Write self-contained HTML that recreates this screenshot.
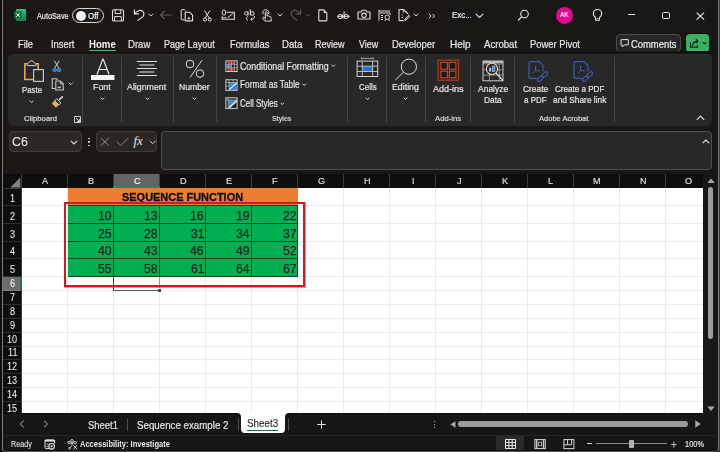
<!DOCTYPE html>
<html><head><meta charset="utf-8">
<style>
*{margin:0;padding:0;box-sizing:border-box}
html,body{width:720px;height:452px;overflow:hidden;background:#0e0e0e}
body{position:relative;font-family:"Liberation Sans",sans-serif;color:#e8e8e8}
.a{position:absolute;white-space:nowrap}
div.t{filter:grayscale(1)}
svg.a{overflow:visible}
</style></head><body>
<div class="a" style="left:0px;top:0px;width:720px;height:452px;background:#101010"></div>
<div class="a" style="left:2px;top:0px;width:716px;height:452px;background:linear-gradient(90deg,#1c1714 0%,#1b1715 45%,#161815 100%);border-radius:0 4px 4px 4px"></div>
<div class="a" style="left:719px;top:0px;width:1px;height:452px;background:#3a3a3a"></div>
<svg class="a" style="left:13px;top:8px;" width="14" height="14" viewBox="0 0 14 14" fill="none"><defs><linearGradient id="xg" x1="0" y1="0" x2="0" y2="1"><stop offset="0" stop-color="#33c481"/><stop offset=".5" stop-color="#21a366"/><stop offset="1" stop-color="#107c41"/></linearGradient></defs>
<rect x="3" y="1" width="10" height="12" rx="1.2" fill="url(#xg)"/>
<rect x="1.2" y="3.2" width="7.6" height="7.6" rx=".8" fill="#13713f"/>
<path d="M3.3 5.2L6.7 8.8M6.7 5.2L3.3 8.8" stroke="#f0f0f0" stroke-width="1"/></svg>
<div class="a t" style="left:36.96px;top:13.00px;font-size:8.14px;line-height:1;color:#e8e8e8;font-weight:400;transform:scaleX(0.896);transform-origin:0 0;-webkit-text-stroke:0.2px #e8e8e8;">AutoSave</div>
<div class="a" style="left:72px;top:8px;width:32px;height:15px;border:1.2px solid #d8d8d8;border-radius:8px;background:#1c1a18"></div>
<div class="a" style="left:75.5px;top:10.5px;width:10px;height:10px;background:#f4f4f4;border-radius:50%"></div>
<div class="a t" style="left:88.04px;top:13.00px;font-size:8.14px;line-height:1;color:#f2f2f2;font-weight:400;transform:scaleX(0.983);transform-origin:0 0;-webkit-text-stroke:0.2px #f2f2f2;">Off</div>
<svg class="a" style="left:111px;top:9px;" width="14" height="13" viewBox="0 0 14 13" fill="none"><rect x="1.5" y="0.8" width="11" height="11.2" rx="1.3" stroke="#e0e0e0" stroke-width="1.1"/><path d="M4.2 1V4.6H9.8V1" stroke="#e0e0e0" stroke-width="1"/><path d="M3.6 12V7.6H10.4V12" stroke="#e0e0e0" stroke-width="1"/></svg>
<svg class="a" style="left:132px;top:8px;" width="14" height="14" viewBox="0 0 14 14" fill="none"><path d="M2.4 1.6V5.9H6.8" stroke="#e8e8e8" stroke-width="1.1"/><path d="M2.6 5.7C5.3 2.4 9.2 1.2 11.2 3.8C12.6 5.7 11.8 7.6 10.2 9.1L5.6 12.6" stroke="#e8e8e8" stroke-width="1.1"/></svg>
<svg class="a" style="left:148px;top:13px;" width="6" height="4" viewBox="0 0 6 4" fill="none"><path d="M0.6 0.8l2.2 2.2 2.2-2.2" stroke="#e0e0e0" stroke-width="1"/></svg>
<svg class="a" style="left:159px;top:10px;" width="14" height="10" viewBox="0 0 14 10" fill="none"><path d="M1.5 5h11M5.5 1l-4 4 4 4" stroke="#5c5c5c" stroke-width="1.1"/></svg>
<svg class="a" style="left:180px;top:9px;" width="14" height="13" viewBox="0 0 14 13" fill="none"><path d="M4.6 10.8H1.8Q1.2 10.8 1.2 10.2V1.2Q1.2 .6 1.8 .6H4.4L5.6 1.8" stroke="#e0e0e0" stroke-width="1"/><path d="M5.2 3.2H9.6L12.6 6.2V11.4Q12.6 11.9 12.1 11.9H5.7Q5.2 11.9 5.2 11.4Z" fill="#1a1715" stroke="#e0e0e0" stroke-width="1.1"/><path d="M7.4 10.2L8.9 7.6 10.4 10.2Z" fill="#e0e0e0"/></svg>
<svg class="a" style="left:203px;top:10px;" width="9" height="12" viewBox="0 0 9 12" fill="none"><path d="M1.5 0.5l5 8M7 0.5l-5 8" stroke="#e0e0e0" stroke-width="1"/><circle cx="2" cy="9.5" r="1.6" stroke="#e0e0e0" stroke-width="1"/><circle cx="6.8" cy="9.5" r="1.6" stroke="#e0e0e0" stroke-width="1"/></svg>
<svg class="a" style="left:221px;top:8.5px;" width="15" height="11" viewBox="0 0 15 11" fill="none"><path d="M5.5 3.2H13.4V10.2H1.2V7.2" stroke="#e0e0e0" stroke-width="1.1"/><rect x="1.3" y="1" width="3.2" height="5" rx="1.4" stroke="#e0e0e0" stroke-width="1"/><path d="M6.5 8.8L12 4.6" stroke="#e0e0e0" stroke-width="1"/><path d="M2.2 8.6h3.2" stroke="#e0e0e0" stroke-width=".9"/></svg>
<svg class="a" style="left:243px;top:8px;" width="13" height="14" viewBox="0 0 13 14" fill="none"><path d="M5 3.5v4M5 5.3A1.7 1.7 0 1 0 5 5.4" stroke="#e0e0e0" stroke-width="1"/><path d="M7.3 1.4v6M7.3 5.5a1.9 1.9 0 1 0 3.8 0a1.9 1.9 0 1 0 -3.8 0" stroke="#e0e0e0" stroke-width="1"/><path d="M4.8 8.6a2 2 0 0 0 0 3.8" stroke="#e0e0e0" stroke-width="1"/><path d="M11.5 8c0 2.2-1 3.3-3.5 3.3M9.3 10l-1.6 1.3 1.6 1.4" stroke="#e0e0e0" stroke-width="1"/></svg>
<svg class="a" style="left:260px;top:8px;" width="13" height="14" viewBox="0 0 13 14" fill="none"><path d="M3.2 6.2a3 3 0 1 1 5.2 0" stroke="#e0e0e0" stroke-width="1"/><path d="M5.3 11.5V4.6a0.9 0.9 0 0 1 1.8 0V8h1.6a2.5 2.5 0 0 1 2.5 2.5v2.6H4.8L2.8 10.5a0.9 0.9 0 0 1 1.4-1.1L5.3 10.6" stroke="#e0e0e0" stroke-width="1"/></svg>
<svg class="a" style="left:277px;top:13px;" width="6" height="4" viewBox="0 0 6 4" fill="none"><path d="M0.8 0.8l2.2 2.2 2.2-2.2" stroke="#d8d8d8" stroke-width="1"/></svg>
<svg class="a" style="left:289px;top:8px;" width="14" height="14" viewBox="0 0 14 14" fill="none"><path d="M11.6 1.6V5.9H7.2" stroke="#5c5c5c" stroke-width="1.1"/><path d="M11.4 5.7C8.7 2.4 4.8 1.2 2.8 3.8C1.4 5.7 2.2 7.6 3.8 9.1L8.4 12.6" stroke="#5c5c5c" stroke-width="1.1"/></svg>
<svg class="a" style="left:305px;top:13px;" width="6" height="4" viewBox="0 0 6 4" fill="none"><path d="M0.8 0.8l2.2 2.2 2.2-2.2" stroke="#5a5a5a" stroke-width="1"/></svg>
<svg class="a" style="left:317px;top:9px;" width="11" height="13" viewBox="0 0 11 13" fill="none"><path d="M2.4 .9H6.6L9.9 4.2V11.3Q9.9 11.9 9.3 11.9H2.4Q1.8 11.9 1.8 11.3V1.5Q1.8 .9 2.4 .9Z" stroke="#e0e0e0" stroke-width="1.1"/><path d="M6.8 1.2L9.6 4H6.8z" fill="#e0e0e0"/></svg>
<svg class="a" style="left:337px;top:10px;" width="13" height="10" viewBox="0 0 13 10" fill="none"><circle cx="3.1" cy="6.5" r="2.1" stroke="#e0e0e0" stroke-width="1"/><path d="M5.3 4.2V8.8M7.1 1.2V8.8" stroke="#e0e0e0" stroke-width="1"/><circle cx="9.3" cy="6.5" r="2.1" stroke="#e0e0e0" stroke-width="1"/><path d="M0.3 6.3H12.7" stroke="#e8e8e8" stroke-width="1"/></svg>
<svg class="a" style="left:357px;top:9px;" width="14" height="11" viewBox="0 0 14 11" fill="none"><path d="M1 3h3l1.2-1.8h3.6l1.2 1.8h3v7h-12z" stroke="#e0e0e0" stroke-width="1.1"/><circle cx="7" cy="6.3" r="2.2" stroke="#e0e0e0" stroke-width="1.1"/></svg>
<svg class="a" style="left:378px;top:9px;" width="14" height="13" viewBox="0 0 14 13" fill="none"><path d="M1 2h11M1 1v10.5" stroke="#e0e0e0" stroke-width="1"/><path d="M2 4h10v2" stroke="#e0e0e0" stroke-width="1"/><path d="M3 6.5h2M3 8.5h2M3 10.5h2" stroke="#e0e0e0" stroke-width="1"/><circle cx="9.2" cy="8.2" r="2.2" stroke="#e0e0e0" stroke-width="1"/><path d="M7 12l1-2M11.5 12l-1-2" stroke="#e0e0e0" stroke-width="1"/></svg>
<svg class="a" style="left:397.5px;top:9px;" width="13" height="13" viewBox="0 0 13 13" fill="none"><path d="M5.8 11.6H1.8Q1 11.6 1 10.8V1.2Q1 .5 1.8 .5H5.5L10.3 5.2" stroke="#e0e0e0" stroke-width="1.1"/><path d="M5.2 .6V3.8" stroke="#e0e0e0" stroke-width=".8"/><path d="M6.8 11.3L11.6 6.5" stroke="#e0e0e0" stroke-width="2"/><path d="M7.4 10.7L11 7.1" stroke="#1a1715" stroke-width=".7"/><circle cx="4.2" cy="5.8" r=".65" fill="#e0e0e0"/><circle cx="4.2" cy="8.4" r=".65" fill="#e0e0e0"/></svg>
<svg class="a" style="left:413px;top:13px;" width="6" height="4" viewBox="0 0 6 4" fill="none"><path d="M0.8 0.8l2.2 2.2 2.2-2.2" stroke="#d8d8d8" stroke-width="1"/></svg>
<svg class="a" style="left:428px;top:13px;" width="8" height="6" viewBox="0 0 8 6" fill="none"><path d="M1 1l2 2-2 2M4.5 1l2 2-2 2" stroke="#e0e0e0" stroke-width="1"/></svg>
<div class="a t" style="left:451.97px;top:11.00px;font-size:8.72px;line-height:1;color:#e6e6e6;font-weight:400;transform:scaleX(0.906);transform-origin:0 0;-webkit-text-stroke:0.2px #e6e6e6;">Exc...</div>
<svg class="a" style="left:475px;top:13px;" width="9" height="6" viewBox="0 0 9 6" fill="none"><path d="M0.8 0.8l3.7 3.7 3.7-3.7" stroke="#e0e0e0" stroke-width="1.1"/></svg>
<svg class="a" style="left:517px;top:9px;" width="13" height="13" viewBox="0 0 13 13" fill="none"><circle cx="7.5" cy="5" r="3.8" stroke="#e6e6e6" stroke-width="1.1"/><path d="M4.8 7.7L1 11.5" stroke="#e6e6e6" stroke-width="1.2"/></svg>
<div class="a" style="left:555.7px;top:6.6px;width:17.6px;height:17.5px;background:#e2078f;border-radius:50%"></div>
<div class="a t" style="left:559.77px;top:12.00px;font-size:7.12px;line-height:1;color:#f8e8f2;font-weight:400;transform:scaleX(0.908);transform-origin:0 0;-webkit-text-stroke:0.2px #f8e8f2;">AK</div>
<svg class="a" style="left:591px;top:8px;" width="13" height="14" viewBox="0 0 13 14" fill="none"><path d="M4.4 9.2C2.6 8 2.3 6.8 2.3 5.4a4.2 3.9 0 0 1 8.4 0c0 1.4-.3 2.6-2.1 3.8L8.3 12.3H4.7z" stroke="#e6e6e6" stroke-width="1.1"/><path d="M5.5 10.5h2" stroke="#cfcfcf" stroke-width=".8"/></svg>
<div class="a" style="left:627.6px;top:14px;width:7.4px;height:1.2px;background:#e0e0e0"></div>
<div class="a" style="left:661.7px;top:11.8px;width:8.3px;height:7.2px;border:1.1px solid #e6e6e6;border-radius:1.5px"></div>
<svg class="a" style="left:696px;top:11.5px;" width="9" height="8" viewBox="0 0 9 8" fill="none"><path d="M0.6 0.6l7.5 7M8.1 0.6l-7.5 7" stroke="#ececec" stroke-width="1.1"/></svg>
<div class="a t" style="left:18.05px;top:40.00px;font-size:10.32px;line-height:1;color:#e8e8e8;font-weight:400;transform:scaleX(0.907);transform-origin:0 0;-webkit-text-stroke:0.2px #e8e8e8;">File</div>
<div class="a t" style="left:50.86px;top:40.00px;font-size:10.32px;line-height:1;color:#e8e8e8;font-weight:400;transform:scaleX(0.907);transform-origin:0 0;-webkit-text-stroke:0.2px #e8e8e8;">Insert</div>
<div class="a t" style="left:128.43px;top:40.00px;font-size:10.32px;line-height:1;color:#e8e8e8;font-weight:400;transform:scaleX(0.928);transform-origin:0 0;-webkit-text-stroke:0.2px #e8e8e8;">Draw</div>
<div class="a t" style="left:164.28px;top:40.00px;font-size:10.32px;line-height:1;color:#e8e8e8;font-weight:400;transform:scaleX(0.876);transform-origin:0 0;-webkit-text-stroke:0.2px #e8e8e8;">Page Layout</div>
<div class="a t" style="left:230.04px;top:40.00px;font-size:10.32px;line-height:1;color:#e8e8e8;font-weight:400;transform:scaleX(0.918);transform-origin:0 0;-webkit-text-stroke:0.2px #e8e8e8;">Formulas</div>
<div class="a t" style="left:281.73px;top:40.00px;font-size:10.32px;line-height:1;color:#e8e8e8;font-weight:400;transform:scaleX(0.931);transform-origin:0 0;-webkit-text-stroke:0.2px #e8e8e8;">Data</div>
<div class="a t" style="left:315.08px;top:40.00px;font-size:10.32px;line-height:1;color:#e8e8e8;font-weight:400;transform:scaleX(0.875);transform-origin:0 0;-webkit-text-stroke:0.2px #e8e8e8;">Review</div>
<div class="a t" style="left:359.16px;top:40.00px;font-size:10.32px;line-height:1;color:#e8e8e8;font-weight:400;transform:scaleX(0.863);transform-origin:0 0;-webkit-text-stroke:0.2px #e8e8e8;">View</div>
<div class="a t" style="left:392.24px;top:40.00px;font-size:10.32px;line-height:1;color:#e8e8e8;font-weight:400;transform:scaleX(0.919);transform-origin:0 0;-webkit-text-stroke:0.2px #e8e8e8;">Developer</div>
<div class="a t" style="left:449.50px;top:40.00px;font-size:10.32px;line-height:1;color:#e8e8e8;font-weight:400;transform:scaleX(0.972);transform-origin:0 0;-webkit-text-stroke:0.2px #e8e8e8;">Help</div>
<div class="a t" style="left:483.65px;top:40.00px;font-size:10.32px;line-height:1;color:#e8e8e8;font-weight:400;transform:scaleX(0.931);transform-origin:0 0;-webkit-text-stroke:0.2px #e8e8e8;">Acrobat</div>
<div class="a t" style="left:530.05px;top:40.00px;font-size:10.32px;line-height:1;color:#e8e8e8;font-weight:400;transform:scaleX(0.908);transform-origin:0 0;-webkit-text-stroke:0.2px #e8e8e8;">Power Pivot</div>
<div class="a t" style="left:88.57px;top:40.00px;font-size:10.32px;line-height:1;color:#f2f2f2;font-weight:700;transform:scaleX(0.935);transform-origin:0 0;">Home</div>
<div class="a" style="left:89px;top:49.8px;width:27px;height:1.8px;background:#5cb68a;border-radius:1px"></div>
<div class="a" style="left:616.3px;top:34.3px;width:64.5px;height:17.4px;border:1px solid #4e4e4e;border-radius:4px;background:#262626"></div>
<svg class="a" style="left:619.5px;top:38.8px;" width="10" height="9" viewBox="0 0 10 9" fill="none"><path d="M1 .9Q1 .6 1.3 .6H8Q8.3 .6 8.3 .9V5.6Q8.3 5.9 8 5.9H4.3L2.2 7.8V5.9H1.3Q1 5.9 1 5.6z" stroke="#e6e6e6" stroke-width="1"/></svg>
<div class="a t" style="left:631.23px;top:40.00px;font-size:10.47px;line-height:1;color:#ececec;font-weight:400;transform:scaleX(0.899);transform-origin:0 0;-webkit-text-stroke:0.2px #ececec;">Comments</div>
<div class="a" style="left:686px;top:34px;width:23px;height:18px;background:#3cb062;border-radius:3.5px;box-shadow:0 0 0 1px #0a0a0a"></div>
<svg class="a" style="left:689px;top:37px;" width="19" height="12" viewBox="0 0 19 12" fill="none"><path d="M1.5 5.2V10.2H8.5V8.2" stroke="#0d2a14" stroke-width="1.2"/><path d="M3.6 9Q3.8 4.6 8.8 4.2M6.9 2.1L9 4.2 6.9 6.3" stroke="#0d2a14" stroke-width="1.2"/><path d="M13.6 5.2l1.8 1.8 1.8-1.8" stroke="#0d2a14" stroke-width="1.1"/></svg>
<div class="a" style="left:3px;top:51px;width:714px;height:3px;background:linear-gradient(180deg,#181513,#141312)"></div>
<div class="a" style="left:8px;top:54px;width:704px;height:72px;background:#282828;border-radius:6px;border-top:1px solid #2e2e2e"></div>
<div class="a" style="left:82px;top:57px;width:1px;height:65px;background:#444"></div>
<div class="a" style="left:121px;top:57px;width:1px;height:65px;background:#444"></div>
<div class="a" style="left:173px;top:57px;width:1px;height:65px;background:#444"></div>
<div class="a" style="left:216px;top:57px;width:1px;height:65px;background:#444"></div>
<div class="a" style="left:347px;top:57px;width:1px;height:65px;background:#444"></div>
<div class="a" style="left:386px;top:57px;width:1px;height:65px;background:#444"></div>
<div class="a" style="left:425px;top:57px;width:1px;height:65px;background:#444"></div>
<div class="a" style="left:470px;top:57px;width:1px;height:65px;background:#444"></div>
<div class="a" style="left:514px;top:57px;width:1px;height:65px;background:#444"></div>
<div class="a" style="left:614px;top:57px;width:1px;height:65px;background:#444"></div>
<svg class="a" style="left:22px;top:59px;" width="24" height="24" viewBox="0 0 24 24" fill="none"><path d="M5.5 4.8H2.8V20.5H11.5M13.5 4.8H16.2V10.5" stroke="#e8a84a" stroke-width="1.6"/>
<path d="M5.2 6.6V5.2L7.8 2.4Q9.5 0.9 11.2 2.4L13.8 5.2V6.6Z" stroke="#d0d0d0" stroke-width="1" fill="#282828"/>
<rect x="11.6" y="10.6" width="9.8" height="11.8" stroke="#c4c4c4" stroke-width="1.2" fill="#282828"/></svg>
<div class="a t" style="left:22.17px;top:85.00px;font-size:9.59px;line-height:1;color:#e6e6e6;font-weight:400;transform:scaleX(0.819);transform-origin:0 0;-webkit-text-stroke:0.2px #e6e6e6;">Paste</div>
<svg class="a" style="left:29.1px;top:99.5px;" width="5" height="4" viewBox="0 0 5 4" fill="none"><path d="M0.7 0.7l1.8 1.8 1.8-1.8" stroke="#dcdcdc" stroke-width="1"/></svg>
<svg class="a" style="left:52px;top:59.5px;" width="10" height="13" viewBox="0 0 10 13" fill="none"><path d="M2.3 0.8l4.6 7.2M7.2 0.8L2.6 8" stroke="#cfcfcf" stroke-width="1"/><ellipse cx="2.6" cy="10" rx="1.8" ry="1.7" fill="#2f6fb8" stroke="#4a8ed8" stroke-width=".9"/><ellipse cx="7" cy="10" rx="1.8" ry="1.7" fill="#2f6fb8" stroke="#4a8ed8" stroke-width=".9"/></svg>
<svg class="a" style="left:50.5px;top:78px;" width="14" height="13" viewBox="0 0 14 13" fill="none"><path d="M4.8 10.5H1.2V0.8h4.5l1 1" stroke="#c8c8c8" stroke-width="1.1"/><path d="M4.8 3h4.6l2.8 2.8v6.2H4.8z" fill="#282828" stroke="#c8c8c8" stroke-width="1.1"/><path d="M9.2 3v3h3" stroke="#c8c8c8" stroke-width=".9"/><rect x="6.6" y="8.6" width="3.2" height="1.6" fill="#c8c8c8"/></svg>
<svg class="a" style="left:68px;top:82px;" width="6" height="4" viewBox="0 0 6 4" fill="none"><path d="M0.7 0.7l2 2 2-2" stroke="#dcdcdc" stroke-width="1"/></svg>
<svg class="a" style="left:50.5px;top:96px;" width="13" height="13" viewBox="0 0 13 13" fill="none"><path d="M0.8 7.5L5 11.8l2.8-2.8-4.2-4.3z" fill="#eda84b"/><path d="M3.6 4.7l4.2 4.3 2-2-4.2-4.3z" stroke="#d8d8d8" stroke-width="1" fill="#282828"/><path d="M8 4l3.8-3.6" stroke="#d8d8d8" stroke-width="1.6"/></svg>
<div class="a t" style="left:24.31px;top:115.00px;font-size:7.85px;line-height:1;color:#dedede;font-weight:400;transform:scaleX(0.985);transform-origin:0 0;-webkit-text-stroke:0.2px #dedede;">Clipboard</div>
<svg class="a" style="left:73.5px;top:115.5px;" width="7" height="7" viewBox="0 0 7 7" fill="none"><path d="M0.5 0.5h6v6h-6z" stroke="#cfcfcf" stroke-width="1"/><path d="M2 2l3.5 3.5M5.5 3v2.5h-2.5" stroke="#cfcfcf" stroke-width="1"/></svg>
<svg class="a" style="left:89.5px;top:57px;" width="26" height="24" viewBox="0 0 26 24" fill="none"><path d="M7 17.5L12.8 2h0.4L19 17.5M9 12.5h8" stroke="#e8e8e8" stroke-width="1.2"/><rect x="1" y="18" width="23.5" height="5" fill="#f4f4f4"/></svg>
<div class="a t" style="left:93.09px;top:82.00px;font-size:9.88px;line-height:1;color:#e6e6e6;font-weight:400;transform:scaleX(0.898);transform-origin:0 0;-webkit-text-stroke:0.2px #e6e6e6;">Font</div>
<svg class="a" style="left:99.7px;top:96.5px;" width="5" height="4" viewBox="0 0 5 4" fill="none"><path d="M0.7 0.7l1.8 1.8 1.8-1.8" stroke="#dcdcdc" stroke-width="1"/></svg>
<svg class="a" style="left:136px;top:59px;" width="22" height="18" viewBox="0 0 22 18" fill="none"><path d="M0.8 2.5h20.2M0.8 9.5h20.2M0.8 16.5h20.2" stroke="#e0e0e0" stroke-width="1"/><path d="M3.4 6h14.9M3.4 13h14.9" stroke="#a8a8a8" stroke-width="1.4"/></svg>
<div class="a t" style="left:127.26px;top:82.00px;font-size:9.88px;line-height:1;color:#e6e6e6;font-weight:400;transform:scaleX(0.892);transform-origin:0 0;-webkit-text-stroke:0.2px #e6e6e6;">Alignment</div>
<svg class="a" style="left:144.5px;top:97.0px;" width="5" height="4" viewBox="0 0 5 4" fill="none"><path d="M0.7 0.7l1.8 1.8 1.8-1.8" stroke="#dcdcdc" stroke-width="1"/></svg>
<svg class="a" style="left:185px;top:59px;" width="20" height="19" viewBox="0 0 20 19" fill="none"><circle cx="5" cy="5" r="3.8" stroke="#e0e0e0" stroke-width="1"/><circle cx="15" cy="14.6" r="3.8" stroke="#e0e0e0" stroke-width="1"/><path d="M17 1.3L5 18.5" stroke="#e0e0e0" stroke-width="1"/></svg>
<div class="a t" style="left:179.21px;top:82.00px;font-size:9.88px;line-height:1;color:#e6e6e6;font-weight:400;transform:scaleX(0.874);transform-origin:0 0;-webkit-text-stroke:0.2px #e6e6e6;">Number</div>
<svg class="a" style="left:192.2px;top:97.0px;" width="5" height="4" viewBox="0 0 5 4" fill="none"><path d="M0.7 0.7l1.8 1.8 1.8-1.8" stroke="#dcdcdc" stroke-width="1"/></svg>
<svg class="a" style="left:225px;top:59.5px;" width="13" height="12" viewBox="0 0 13 12" fill="none"><rect x="0.9" y="0.9" width="11.2" height="10.6" stroke="#d0d0d0" stroke-width="1" fill="#1e1e1e"/>
<rect x="3.4" y="1.2" width="6" height="3" fill="#e0282c"/><rect x="1.3" y="4.5" width="5" height="3" fill="#3d8be0"/><rect x="3.4" y="7.9" width="6" height="3.2" fill="#e0282c"/>
<path d="M3.3 1v10.2M6.5 1v10.2M9.5 1v10.2M1 4.3h11M1 7.7h11" stroke="#b8b8b8" stroke-width=".7"/></svg>
<div class="a t" style="left:239.56px;top:62.00px;font-size:10.03px;line-height:1;color:#e6e6e6;font-weight:400;transform:scaleX(0.880);transform-origin:0 0;-webkit-text-stroke:0.2px #e6e6e6;">Conditional Formatting</div>
<svg class="a" style="left:331px;top:64px;" width="5" height="4" viewBox="0 0 5 4" fill="none"><path d="M0.5 0.7l1.8 1.8 1.8-1.8" stroke="#dcdcdc" stroke-width="1"/></svg>
<svg class="a" style="left:225px;top:78.5px;" width="13" height="12" viewBox="0 0 13 12" fill="none"><rect x="0.9" y="0.8" width="11.2" height="10.6" stroke="#d0d0d0" stroke-width="1" fill="#1e1e1e"/>
<path d="M4.3 3.8h7.5v7.3h-7.5z" fill="#3d8be0"/><path d="M0.8 3.5h11.3M4 0.8v10.5M8 0.8v3M0.8 7h3.2" stroke="#b8b8b8" stroke-width=".8"/>
<path d="M4.5 10.5l7.3-6.5" stroke="#f0f0f0" stroke-width="1.3"/><path d="M5.5 11l6-5" stroke="#1a3a66" stroke-width=".6"/></svg>
<div class="a t" style="left:239.93px;top:80.00px;font-size:10.03px;line-height:1;color:#e6e6e6;font-weight:400;transform:scaleX(0.833);transform-origin:0 0;-webkit-text-stroke:0.2px #e6e6e6;">Format as Table</div>
<svg class="a" style="left:302px;top:83px;" width="5" height="4" viewBox="0 0 5 4" fill="none"><path d="M0.5 0.7l1.8 1.8 1.8-1.8" stroke="#dcdcdc" stroke-width="1"/></svg>
<svg class="a" style="left:225px;top:97px;" width="13" height="12" viewBox="0 0 13 12" fill="none"><rect x="0.9" y="0.8" width="11.2" height="10.6" stroke="#d0d0d0" stroke-width="1" fill="#1e1e1e"/>
<path d="M3.5 3.2h8.3v2L5 11.2H3.5z" fill="#3d8be0"/><path d="M0.8 3h11.3M3.2 0.8v10.5" stroke="#b8b8b8" stroke-width=".8"/>
<path d="M4 10.8l8-7.3" stroke="#f0f0f0" stroke-width="1.3"/></svg>
<div class="a t" style="left:239.60px;top:99.00px;font-size:10.03px;line-height:1;color:#e6e6e6;font-weight:400;transform:scaleX(0.799);transform-origin:0 0;-webkit-text-stroke:0.2px #e6e6e6;">Cell Styles</div>
<svg class="a" style="left:280px;top:102px;" width="5" height="4" viewBox="0 0 5 4" fill="none"><path d="M0.5 0.7l1.8 1.8 1.8-1.8" stroke="#dcdcdc" stroke-width="1"/></svg>
<div class="a t" style="left:272.48px;top:115.00px;font-size:7.85px;line-height:1;color:#dedede;font-weight:400;transform:scaleX(0.910);transform-origin:0 0;-webkit-text-stroke:0.2px #dedede;">Styles</div>
<svg class="a" style="left:356px;top:56px;" width="23" height="22" viewBox="0 0 23 22" fill="none"><path d="M5.8 2.4H17M5.6 1.2V3.6M17.2 1.2V3.6" stroke="#8fb5d8" stroke-width=".9"/>
<rect x="6.3" y="10.2" width="10.3" height="5.3" fill="#2273cf"/>
<rect x="1.1" y="5.1" width="20.6" height="15.4" stroke="#d2d2d2" stroke-width="1"/><path d="M1 10.2h20.8M1 15.5h20.8M6.3 5v15.6M16.6 5v15.6" stroke="#c8c8c8" stroke-width=".9"/></svg>
<div class="a t" style="left:358.60px;top:82.00px;font-size:9.88px;line-height:1;color:#e6e6e6;font-weight:400;transform:scaleX(0.804);transform-origin:0 0;-webkit-text-stroke:0.2px #e6e6e6;">Cells</div>
<svg class="a" style="left:364.5px;top:97.0px;" width="5" height="4" viewBox="0 0 5 4" fill="none"><path d="M0.7 0.7l1.8 1.8 1.8-1.8" stroke="#dcdcdc" stroke-width="1"/></svg>
<svg class="a" style="left:393px;top:57px;" width="26" height="24" viewBox="0 0 26 24" fill="none"><circle cx="15.9" cy="9.7" r="7.6" stroke="#e0e0e0" stroke-width="1"/><path d="M10.5 15.1L2.4 23" stroke="#e0e0e0" stroke-width="1"/></svg>
<div class="a t" style="left:392.30px;top:82.00px;font-size:9.88px;line-height:1;color:#e6e6e6;font-weight:400;transform:scaleX(0.890);transform-origin:0 0;-webkit-text-stroke:0.2px #e6e6e6;">Editing</div>
<svg class="a" style="left:403.3px;top:97.0px;" width="5" height="4" viewBox="0 0 5 4" fill="none"><path d="M0.7 0.7l1.8 1.8 1.8-1.8" stroke="#dcdcdc" stroke-width="1"/></svg>
<svg class="a" style="left:437px;top:59px;" width="23" height="23" viewBox="0 0 23 23" fill="none"><rect x="1.2" y="1.2" width="20.3" height="20" stroke="#963a22" stroke-width="1.4" fill="#3e1d14"/>
<rect x="3.8" y="3.4" width="6.6" height="6.8" stroke="#b8532f" stroke-width="1.1" fill="#1d1a19"/><rect x="12.3" y="3.4" width="6.6" height="6.8" stroke="#b8532f" stroke-width="1.1" fill="#1d1a19"/>
<rect x="3.8" y="12.2" width="6.6" height="6.6" stroke="#b8532f" stroke-width="1.1" fill="#1d1a19"/><rect x="12.3" y="12.2" width="6.6" height="6.6" stroke="#b8532f" stroke-width="1.1" fill="#1d1a19"/></svg>
<div class="a t" style="left:432.95px;top:84.00px;font-size:9.88px;line-height:1;color:#e6e6e6;font-weight:400;transform:scaleX(0.912);transform-origin:0 0;-webkit-text-stroke:0.2px #e6e6e6;">Add-ins</div>
<div class="a t" style="left:435.16px;top:115.00px;font-size:7.85px;line-height:1;color:#dedede;font-weight:400;transform:scaleX(0.985);transform-origin:0 0;-webkit-text-stroke:0.2px #dedede;">Add-ins</div>
<svg class="a" style="left:482px;top:59.5px;" width="23" height="22" viewBox="0 0 23 22" fill="none"><rect x="1" y="1" width="20" height="19.8" stroke="#cdcdcd" stroke-width="1"/><rect x="1" y="1" width="20" height="2.2" fill="#bdbdbd"/>
<path d="M1 3.9h20M1 9.8h20M1 15.1h20M7.4 3.9v17M17.3 3.9v17" stroke="#a8a8a8" stroke-width=".8"/>
<circle cx="10" cy="8.9" r="5.6" stroke="#e0e0e0" stroke-width="1.1" fill="#282828"/><path d="M14 13l7 7.5" stroke="#e0e0e0" stroke-width="1.1"/>
<rect x="7" y="7.8" width="2.2" height="3.8" fill="#bdbdbd"/><rect x="10.3" y="6" width="2.6" height="5.6" fill="#2f7fd6" stroke="#e8e8e8" stroke-width=".5"/></svg>
<div class="a t" style="left:477.86px;top:84.00px;font-size:9.88px;line-height:1;color:#e6e6e6;font-weight:400;transform:scaleX(0.860);transform-origin:0 0;-webkit-text-stroke:0.2px #e6e6e6;">Analyze</div>
<div class="a t" style="left:483.63px;top:95.00px;font-size:9.88px;line-height:1;color:#e6e6e6;font-weight:400;transform:scaleX(0.847);transform-origin:0 0;-webkit-text-stroke:0.2px #e6e6e6;">Data</div>
<svg class="a" style="left:528px;top:61px;" width="22" height="22" viewBox="0 0 22 22" fill="none"><path d="M8.8 17.4H2.6Q1 17.4 1 15.8V2.3Q1 0.7 2.6 0.7H11.3L15 4.6V10.2" stroke="#3a5cb0" stroke-width="1.2"/>
<path d="M7.6 4.5V9.6L4.6 12.3M7.6 9.6L11.6 9.9" stroke="#3f5fb5" stroke-width="1"/>
<rect x="9" y="16" width="6.6" height="3.4" rx="1.7" transform="rotate(-42 12.3 17.7)" stroke="#3a5cb0" stroke-width="1.1"/>
<rect x="13.6" y="11.8" width="6.6" height="3.4" rx="1.7" transform="rotate(-42 16.9 13.5)" stroke="#3a5cb0" stroke-width="1.1"/></svg>
<div class="a t" style="left:523.18px;top:84.00px;font-size:9.88px;line-height:1;color:#e6e6e6;font-weight:400;transform:scaleX(0.850);transform-origin:0 0;-webkit-text-stroke:0.2px #e6e6e6;">Create</div>
<div class="a t" style="left:524.24px;top:95.00px;font-size:9.88px;line-height:1;color:#e6e6e6;font-weight:400;transform:scaleX(0.809);transform-origin:0 0;-webkit-text-stroke:0.2px #e6e6e6;">a PDF</div>
<svg class="a" style="left:572.5px;top:61px;" width="22" height="22" viewBox="0 0 22 22" fill="none"><path d="M8.8 17.4H2.6Q1 17.4 1 15.8V2.3Q1 0.7 2.6 0.7H11.3L15 4.6V10.2" stroke="#3a5cb0" stroke-width="1.2"/>
<path d="M7.6 4.5V9.6L4.6 12.3M7.6 9.6L11.6 9.9" stroke="#3f5fb5" stroke-width="1"/>
<rect x="9" y="16" width="6.6" height="3.4" rx="1.7" transform="rotate(-42 12.3 17.7)" stroke="#3a5cb0" stroke-width="1.1"/>
<rect x="13.6" y="11.8" width="6.6" height="3.4" rx="1.7" transform="rotate(-42 16.9 13.5)" stroke="#3a5cb0" stroke-width="1.1"/></svg>
<div class="a t" style="left:555.30px;top:84.00px;font-size:9.88px;line-height:1;color:#e6e6e6;font-weight:400;transform:scaleX(0.818);transform-origin:0 0;-webkit-text-stroke:0.2px #e6e6e6;">Create a PDF</div>
<div class="a t" style="left:553.42px;top:95.00px;font-size:9.88px;line-height:1;color:#e6e6e6;font-weight:400;transform:scaleX(0.846);transform-origin:0 0;-webkit-text-stroke:0.2px #e6e6e6;">and Share link</div>
<div class="a t" style="left:539.36px;top:115.00px;font-size:7.85px;line-height:1;color:#dedede;font-weight:400;transform:scaleX(0.959);transform-origin:0 0;-webkit-text-stroke:0.2px #dedede;">Adobe Acrobat</div>
<svg class="a" style="left:695.5px;top:115px;" width="9" height="6" viewBox="0 0 9 6" fill="none"><path d="M0.8 4.8l3.7-3.7 3.7 3.7" stroke="#e0e0e0" stroke-width="1.1"/></svg>
<div class="a" style="left:8.5px;top:131.2px;width:73.5px;height:20.8px;background:#2a2724;border:1px solid #3f3b38;border-radius:4px"></div>
<div class="a t" style="left:11.88px;top:135.00px;font-size:13.23px;line-height:1;color:#f0f0f0;font-weight:400;transform:scaleX(0.942);transform-origin:0 0;-webkit-text-stroke:0.05px #f0f0f0">C6</div>
<svg class="a" style="left:69.5px;top:139.5px;" width="8" height="6" viewBox="0 0 8 6" fill="none"><path d="M0.8 0.8l3.2 3.2 3.2-3.2" stroke="#e0e0e0" stroke-width="1.1"/></svg>
<div class="a" style="left:88px;top:137.9px;width:1.6px;height:1.6px;background:#e8e8e8;border-radius:50%"></div>
<div class="a" style="left:88px;top:141.10000000000002px;width:1.6px;height:1.6px;background:#e8e8e8;border-radius:50%"></div>
<div class="a" style="left:88px;top:144.60000000000002px;width:1.6px;height:1.6px;background:#e8e8e8;border-radius:50%"></div>
<div class="a" style="left:96px;top:131.2px;width:60.5px;height:20.8px;background:#2a2724;border:1px solid #3f3b38;border-radius:4px"></div>
<svg class="a" style="left:100px;top:137px;" width="10" height="10" viewBox="0 0 10 10" fill="none"><path d="M0.8 0.8l8 8M8.8 0.8l-8 8" stroke="#8a8a8a" stroke-width="1"/></svg>
<svg class="a" style="left:116px;top:137px;" width="13" height="10" viewBox="0 0 13 10" fill="none"><path d="M0.8 4.5l4 4 7.5-7.5" stroke="#8a8a8a" stroke-width="1"/></svg>
<div class="a" style="left:133.5px;top:133.5px;font-family:'Liberation Serif',serif;font-style:italic;font-size:13px;line-height:1;color:#e8e8e8">fx</div>
<svg class="a" style="left:148.5px;top:139.5px;" width="8" height="5" viewBox="0 0 8 5" fill="none"><path d="M0.7 0.7l3 3 3-3" stroke="#cfcfcf" stroke-width="1"/></svg>
<div class="a" style="left:160.6px;top:131.4px;width:551.2px;height:38.5px;background:#282828;border:1px solid #4e4e4e;border-radius:4px"></div>
<svg class="a" style="left:701.5px;top:138.5px;" width="8" height="5" viewBox="0 0 8 5" fill="none"><path d="M0.7 4.2l3.2-3.2 3.2 3.2" stroke="#e8e8e8" stroke-width="1.1"/></svg>
<div class="a" style="left:3px;top:174px;width:700px;height:14px;background:#0e0e0e"></div>
<div class="a" style="left:3px;top:188px;width:19px;height:225px;background:#0e0e0e"></div>
<div class="a" style="left:22px;top:188px;width:681px;height:225px;background:#ffffff"></div>
<div class="a" style="left:113px;top:174px;width:47px;height:14px;background:#636363"></div>
<div class="a" style="left:3px;top:277px;width:18px;height:13px;background:#6c6c6c"></div>
<svg class="a" style="left:10px;top:176.5px;" width="11" height="11" viewBox="0 0 11 11" fill="none"><path d="M10.3 0.4v10h-10z" fill="#808080"/></svg>
<div class="a t" style="left:42.45px;top:176.00px;font-size:9.59px;line-height:1;color:#dcdcdc;font-weight:400;transform:scaleX(0.950);transform-origin:0 0;-webkit-text-stroke:0.2px #dcdcdc;">A</div>
<div class="a" style="left:67px;top:174px;width:1px;height:14px;background:#3c3c3c"></div>
<div class="a t" style="left:87.83px;top:176.00px;font-size:9.59px;line-height:1;color:#dcdcdc;font-weight:400;transform:scaleX(0.950);transform-origin:0 0;-webkit-text-stroke:0.2px #dcdcdc;">B</div>
<div class="a" style="left:113px;top:174px;width:1px;height:14px;background:#3c3c3c"></div>
<div class="a t" style="left:133.67px;top:176.00px;font-size:9.59px;line-height:1;color:#f6f6f6;font-weight:400;transform:scaleX(0.950);transform-origin:0 0;-webkit-text-stroke:0.2px #f6f6f6;">C</div>
<div class="a" style="left:159px;top:174px;width:1px;height:14px;background:#3c3c3c"></div>
<div class="a t" style="left:179.56px;top:176.00px;font-size:9.59px;line-height:1;color:#dcdcdc;font-weight:400;transform:scaleX(0.950);transform-origin:0 0;-webkit-text-stroke:0.2px #dcdcdc;">D</div>
<div class="a" style="left:205px;top:174px;width:1px;height:14px;background:#3c3c3c"></div>
<div class="a t" style="left:225.79px;top:176.00px;font-size:9.59px;line-height:1;color:#dcdcdc;font-weight:400;transform:scaleX(0.950);transform-origin:0 0;-webkit-text-stroke:0.2px #dcdcdc;">E</div>
<div class="a" style="left:251px;top:174px;width:1px;height:14px;background:#3c3c3c"></div>
<div class="a t" style="left:272.04px;top:176.00px;font-size:9.59px;line-height:1;color:#dcdcdc;font-weight:400;transform:scaleX(0.950);transform-origin:0 0;-webkit-text-stroke:0.2px #dcdcdc;">F</div>
<div class="a" style="left:297px;top:174px;width:1px;height:14px;background:#3c3c3c"></div>
<div class="a t" style="left:317.56px;top:176.00px;font-size:9.59px;line-height:1;color:#dcdcdc;font-weight:400;transform:scaleX(0.950);transform-origin:0 0;-webkit-text-stroke:0.2px #dcdcdc;">G</div>
<div class="a" style="left:343px;top:174px;width:1px;height:14px;background:#3c3c3c"></div>
<div class="a t" style="left:363.72px;top:176.00px;font-size:9.59px;line-height:1;color:#dcdcdc;font-weight:400;transform:scaleX(0.950);transform-origin:0 0;-webkit-text-stroke:0.2px #dcdcdc;">H</div>
<div class="a" style="left:389px;top:174px;width:1px;height:14px;background:#3c3c3c"></div>
<div class="a t" style="left:411.75px;top:176.00px;font-size:9.59px;line-height:1;color:#dcdcdc;font-weight:400;transform:scaleX(0.950);transform-origin:0 0;-webkit-text-stroke:0.2px #dcdcdc;">I</div>
<div class="a" style="left:435px;top:174px;width:1px;height:14px;background:#3c3c3c"></div>
<div class="a t" style="left:457.00px;top:176.00px;font-size:9.59px;line-height:1;color:#dcdcdc;font-weight:400;transform:scaleX(0.950);transform-origin:0 0;-webkit-text-stroke:0.2px #dcdcdc;">J</div>
<div class="a" style="left:481px;top:174px;width:1px;height:14px;background:#3c3c3c"></div>
<div class="a t" style="left:501.65px;top:176.00px;font-size:9.59px;line-height:1;color:#dcdcdc;font-weight:400;transform:scaleX(0.950);transform-origin:0 0;-webkit-text-stroke:0.2px #dcdcdc;">K</div>
<div class="a" style="left:527px;top:174px;width:1px;height:14px;background:#3c3c3c"></div>
<div class="a t" style="left:548.24px;top:176.00px;font-size:9.59px;line-height:1;color:#dcdcdc;font-weight:400;transform:scaleX(0.950);transform-origin:0 0;-webkit-text-stroke:0.2px #dcdcdc;">L</div>
<div class="a" style="left:573px;top:174px;width:1px;height:14px;background:#3c3c3c"></div>
<div class="a t" style="left:593.22px;top:176.00px;font-size:9.59px;line-height:1;color:#dcdcdc;font-weight:400;transform:scaleX(0.950);transform-origin:0 0;-webkit-text-stroke:0.2px #dcdcdc;">M</div>
<div class="a" style="left:619px;top:174px;width:1px;height:14px;background:#3c3c3c"></div>
<div class="a t" style="left:639.72px;top:176.00px;font-size:9.59px;line-height:1;color:#dcdcdc;font-weight:400;transform:scaleX(0.950);transform-origin:0 0;-webkit-text-stroke:0.2px #dcdcdc;">N</div>
<div class="a" style="left:665px;top:174px;width:1px;height:14px;background:#3c3c3c"></div>
<div class="a t" style="left:685.47px;top:176.00px;font-size:9.59px;line-height:1;color:#dcdcdc;font-weight:400;transform:scaleX(0.950);transform-origin:0 0;-webkit-text-stroke:0.2px #dcdcdc;">O</div>
<div class="a" style="left:21px;top:174px;width:1px;height:239px;background:#3a3a3a"></div>
<div class="a" style="left:3px;top:188px;width:19px;height:1px;background:#3a3a3a"></div>
<div class="a" style="left:3px;top:205px;width:18px;height:1px;background:#2c2c2c"></div>
<div class="a t" style="left:9.95px;top:194.00px;font-size:10.14px;line-height:1;color:#ececec;font-weight:400;transform:scaleX(0.900);transform-origin:0 0;-webkit-text-stroke:0.05px #ececec">1</div>
<div class="a" style="left:3px;top:223px;width:18px;height:1px;background:#2c2c2c"></div>
<div class="a t" style="left:10.07px;top:212.00px;font-size:10.14px;line-height:1;color:#ececec;font-weight:400;transform:scaleX(0.900);transform-origin:0 0;-webkit-text-stroke:0.05px #ececec">2</div>
<div class="a" style="left:3px;top:241px;width:18px;height:1px;background:#2c2c2c"></div>
<div class="a t" style="left:10.09px;top:230.00px;font-size:10.14px;line-height:1;color:#ececec;font-weight:400;transform:scaleX(0.900);transform-origin:0 0;-webkit-text-stroke:0.05px #ececec">3</div>
<div class="a" style="left:3px;top:258px;width:18px;height:1px;background:#2c2c2c"></div>
<div class="a t" style="left:10.09px;top:247.00px;font-size:10.14px;line-height:1;color:#ececec;font-weight:400;transform:scaleX(0.900);transform-origin:0 0;-webkit-text-stroke:0.05px #ececec">4</div>
<div class="a" style="left:3px;top:276px;width:18px;height:1px;background:#2c2c2c"></div>
<div class="a t" style="left:10.07px;top:265.00px;font-size:10.14px;line-height:1;color:#ececec;font-weight:400;transform:scaleX(0.900);transform-origin:0 0;-webkit-text-stroke:0.05px #ececec">5</div>
<div class="a" style="left:3px;top:290px;width:18px;height:1px;background:#2c2c2c"></div>
<div class="a t" style="left:10.04px;top:279.00px;font-size:10.14px;line-height:1;color:#ffffff;font-weight:400;transform:scaleX(0.900);transform-origin:0 0;-webkit-text-stroke:0.05px #ececec">6</div>
<div class="a" style="left:3px;top:304px;width:18px;height:1px;background:#2c2c2c"></div>
<div class="a t" style="left:10.07px;top:293.00px;font-size:10.14px;line-height:1;color:#ececec;font-weight:400;transform:scaleX(0.900);transform-origin:0 0;-webkit-text-stroke:0.05px #ececec">7</div>
<div class="a" style="left:3px;top:318px;width:18px;height:1px;background:#2c2c2c"></div>
<div class="a t" style="left:10.04px;top:307.00px;font-size:10.14px;line-height:1;color:#ececec;font-weight:400;transform:scaleX(0.900);transform-origin:0 0;-webkit-text-stroke:0.05px #ececec">8</div>
<div class="a" style="left:3px;top:332px;width:18px;height:1px;background:#2c2c2c"></div>
<div class="a t" style="left:10.07px;top:321.00px;font-size:10.14px;line-height:1;color:#ececec;font-weight:400;transform:scaleX(0.900);transform-origin:0 0;-webkit-text-stroke:0.05px #ececec">9</div>
<div class="a" style="left:3px;top:346px;width:18px;height:1px;background:#2c2c2c"></div>
<div class="a t" style="left:7.37px;top:335.00px;font-size:10.14px;line-height:1;color:#ececec;font-weight:400;transform:scaleX(0.900);transform-origin:0 0;-webkit-text-stroke:0.05px #ececec">10</div>
<div class="a" style="left:3px;top:359px;width:18px;height:1px;background:#2c2c2c"></div>
<div class="a t" style="left:7.76px;top:348.00px;font-size:10.14px;line-height:1;color:#ececec;font-weight:400;transform:scaleX(0.900);transform-origin:0 0;-webkit-text-stroke:0.05px #ececec">11</div>
<div class="a" style="left:3px;top:373px;width:18px;height:1px;background:#2c2c2c"></div>
<div class="a t" style="left:7.42px;top:362.00px;font-size:10.14px;line-height:1;color:#ececec;font-weight:400;transform:scaleX(0.900);transform-origin:0 0;-webkit-text-stroke:0.05px #ececec">12</div>
<div class="a" style="left:3px;top:387px;width:18px;height:1px;background:#2c2c2c"></div>
<div class="a t" style="left:7.40px;top:376.00px;font-size:10.14px;line-height:1;color:#ececec;font-weight:400;transform:scaleX(0.900);transform-origin:0 0;-webkit-text-stroke:0.05px #ececec">13</div>
<div class="a" style="left:3px;top:401px;width:18px;height:1px;background:#2c2c2c"></div>
<div class="a t" style="left:7.33px;top:390.00px;font-size:10.14px;line-height:1;color:#ececec;font-weight:400;transform:scaleX(0.900);transform-origin:0 0;-webkit-text-stroke:0.05px #ececec">14</div>
<div class="a t" style="left:7.37px;top:404.00px;font-size:10.14px;line-height:1;color:#ececec;font-weight:400;transform:scaleX(0.900);transform-origin:0 0;-webkit-text-stroke:0.05px #ececec">15</div>
<div class="a" style="left:113px;top:186px;width:47px;height:2px;background:#3f7a66"></div>
<div class="a" style="left:20px;top:277px;width:2px;height:13px;background:#2f6b4f"></div>
<div class="a" style="left:3px;top:290px;width:18px;height:1px;background:#7a7a7a"></div>
<div class="a" style="left:67px;top:188px;width:1px;height:225px;background:#ebebeb"></div>
<div class="a" style="left:113px;top:188px;width:1px;height:225px;background:#ebebeb"></div>
<div class="a" style="left:159px;top:188px;width:1px;height:225px;background:#ebebeb"></div>
<div class="a" style="left:205px;top:188px;width:1px;height:225px;background:#ebebeb"></div>
<div class="a" style="left:251px;top:188px;width:1px;height:225px;background:#ebebeb"></div>
<div class="a" style="left:297px;top:188px;width:1px;height:225px;background:#ebebeb"></div>
<div class="a" style="left:343px;top:188px;width:1px;height:225px;background:#ebebeb"></div>
<div class="a" style="left:389px;top:188px;width:1px;height:225px;background:#ebebeb"></div>
<div class="a" style="left:435px;top:188px;width:1px;height:225px;background:#ebebeb"></div>
<div class="a" style="left:481px;top:188px;width:1px;height:225px;background:#ebebeb"></div>
<div class="a" style="left:527px;top:188px;width:1px;height:225px;background:#ebebeb"></div>
<div class="a" style="left:573px;top:188px;width:1px;height:225px;background:#ebebeb"></div>
<div class="a" style="left:619px;top:188px;width:1px;height:225px;background:#ebebeb"></div>
<div class="a" style="left:665px;top:188px;width:1px;height:225px;background:#ebebeb"></div>
<div class="a" style="left:22px;top:205px;width:681px;height:1px;background:#ebebeb"></div>
<div class="a" style="left:22px;top:223px;width:681px;height:1px;background:#ebebeb"></div>
<div class="a" style="left:22px;top:241px;width:681px;height:1px;background:#ebebeb"></div>
<div class="a" style="left:22px;top:258px;width:681px;height:1px;background:#ebebeb"></div>
<div class="a" style="left:22px;top:276px;width:681px;height:1px;background:#ebebeb"></div>
<div class="a" style="left:22px;top:290px;width:681px;height:1px;background:#ebebeb"></div>
<div class="a" style="left:22px;top:304px;width:681px;height:1px;background:#ebebeb"></div>
<div class="a" style="left:22px;top:318px;width:681px;height:1px;background:#ebebeb"></div>
<div class="a" style="left:22px;top:332px;width:681px;height:1px;background:#ebebeb"></div>
<div class="a" style="left:22px;top:346px;width:681px;height:1px;background:#ebebeb"></div>
<div class="a" style="left:22px;top:359px;width:681px;height:1px;background:#ebebeb"></div>
<div class="a" style="left:22px;top:373px;width:681px;height:1px;background:#ebebeb"></div>
<div class="a" style="left:22px;top:387px;width:681px;height:1px;background:#ebebeb"></div>
<div class="a" style="left:22px;top:401px;width:681px;height:1px;background:#ebebeb"></div>
<div class="a" style="left:68px;top:188px;width:230px;height:17px;background:#ed7d31"></div>
<div class="a t" style="left:122.37px;top:191.00px;font-size:11.63px;line-height:1;color:#1e0c06;font-weight:700;transform:scaleX(0.942);transform-origin:0 0;-webkit-text-stroke:0.3px #1e0c06">SEQUENCE FUNCTION</div>
<div class="a" style="left:68px;top:205px;width:230px;height:72px;background:#00b050"></div>
<div class="a" style="left:113px;top:205px;width:1px;height:72px;background:#0c4420"></div>
<div class="a" style="left:159px;top:205px;width:1px;height:72px;background:#0c4420"></div>
<div class="a" style="left:205px;top:205px;width:1px;height:72px;background:#0c4420"></div>
<div class="a" style="left:251px;top:205px;width:1px;height:72px;background:#0c4420"></div>
<div class="a" style="left:297px;top:205px;width:1px;height:72px;background:#0c4420"></div>
<div class="a" style="left:68px;top:205px;width:230px;height:1px;background:#0c4420"></div>
<div class="a" style="left:68px;top:223px;width:230px;height:1px;background:#0c4420"></div>
<div class="a" style="left:68px;top:241px;width:230px;height:1px;background:#0c4420"></div>
<div class="a" style="left:68px;top:258px;width:230px;height:1px;background:#0c4420"></div>
<div class="a" style="left:68px;top:276px;width:230px;height:1px;background:#0c4420"></div>
<div class="a t" style="left:98.38px;top:210.00px;font-size:12.68px;line-height:1;color:#062a10;font-weight:400;transform:scaleX(0.960);transform-origin:0 0;-webkit-text-stroke:0.25px #062a10">10</div>
<div class="a t" style="left:144.44px;top:210.00px;font-size:12.68px;line-height:1;color:#062a10;font-weight:400;transform:scaleX(0.960);transform-origin:0 0;-webkit-text-stroke:0.25px #062a10">13</div>
<div class="a t" style="left:190.44px;top:210.00px;font-size:12.68px;line-height:1;color:#062a10;font-weight:400;transform:scaleX(0.960);transform-origin:0 0;-webkit-text-stroke:0.25px #062a10">16</div>
<div class="a t" style="left:236.44px;top:210.00px;font-size:12.68px;line-height:1;color:#062a10;font-weight:400;transform:scaleX(0.960);transform-origin:0 0;-webkit-text-stroke:0.25px #062a10">19</div>
<div class="a t" style="left:282.50px;top:210.00px;font-size:12.68px;line-height:1;color:#062a10;font-weight:400;transform:scaleX(0.960);transform-origin:0 0;-webkit-text-stroke:0.25px #062a10">22</div>
<div class="a t" style="left:98.38px;top:228.00px;font-size:12.68px;line-height:1;color:#062a10;font-weight:400;transform:scaleX(0.960);transform-origin:0 0;-webkit-text-stroke:0.25px #062a10">25</div>
<div class="a t" style="left:144.38px;top:228.00px;font-size:12.68px;line-height:1;color:#062a10;font-weight:400;transform:scaleX(0.960);transform-origin:0 0;-webkit-text-stroke:0.25px #062a10">28</div>
<div class="a t" style="left:190.50px;top:228.00px;font-size:12.68px;line-height:1;color:#062a10;font-weight:400;transform:scaleX(0.960);transform-origin:0 0;-webkit-text-stroke:0.25px #062a10">31</div>
<div class="a t" style="left:236.26px;top:228.00px;font-size:12.68px;line-height:1;color:#062a10;font-weight:400;transform:scaleX(0.960);transform-origin:0 0;-webkit-text-stroke:0.25px #062a10">34</div>
<div class="a t" style="left:282.50px;top:228.00px;font-size:12.68px;line-height:1;color:#062a10;font-weight:400;transform:scaleX(0.960);transform-origin:0 0;-webkit-text-stroke:0.25px #062a10">37</div>
<div class="a t" style="left:98.38px;top:245.00px;font-size:12.68px;line-height:1;color:#062a10;font-weight:400;transform:scaleX(0.960);transform-origin:0 0;-webkit-text-stroke:0.25px #062a10">40</div>
<div class="a t" style="left:144.44px;top:245.00px;font-size:12.68px;line-height:1;color:#062a10;font-weight:400;transform:scaleX(0.960);transform-origin:0 0;-webkit-text-stroke:0.25px #062a10">43</div>
<div class="a t" style="left:190.44px;top:245.00px;font-size:12.68px;line-height:1;color:#062a10;font-weight:400;transform:scaleX(0.960);transform-origin:0 0;-webkit-text-stroke:0.25px #062a10">46</div>
<div class="a t" style="left:236.44px;top:245.00px;font-size:12.68px;line-height:1;color:#062a10;font-weight:400;transform:scaleX(0.960);transform-origin:0 0;-webkit-text-stroke:0.25px #062a10">49</div>
<div class="a t" style="left:282.50px;top:245.00px;font-size:12.68px;line-height:1;color:#062a10;font-weight:400;transform:scaleX(0.960);transform-origin:0 0;-webkit-text-stroke:0.25px #062a10">52</div>
<div class="a t" style="left:98.38px;top:263.00px;font-size:12.68px;line-height:1;color:#062a10;font-weight:400;transform:scaleX(0.960);transform-origin:0 0;-webkit-text-stroke:0.25px #062a10">55</div>
<div class="a t" style="left:144.38px;top:263.00px;font-size:12.68px;line-height:1;color:#062a10;font-weight:400;transform:scaleX(0.960);transform-origin:0 0;-webkit-text-stroke:0.25px #062a10">58</div>
<div class="a t" style="left:190.50px;top:263.00px;font-size:12.68px;line-height:1;color:#062a10;font-weight:400;transform:scaleX(0.960);transform-origin:0 0;-webkit-text-stroke:0.25px #062a10">61</div>
<div class="a t" style="left:236.26px;top:263.00px;font-size:12.68px;line-height:1;color:#062a10;font-weight:400;transform:scaleX(0.960);transform-origin:0 0;-webkit-text-stroke:0.25px #062a10">64</div>
<div class="a t" style="left:282.50px;top:263.00px;font-size:12.68px;line-height:1;color:#062a10;font-weight:400;transform:scaleX(0.960);transform-origin:0 0;-webkit-text-stroke:0.25px #062a10">67</div>
<div class="a" style="left:113px;top:277px;width:1px;height:14px;background:#2c4a3c"></div>
<div class="a" style="left:159px;top:277px;width:1px;height:11px;background:#9a9a9a"></div>
<div class="a" style="left:113px;top:290px;width:45px;height:1px;background:#3d5a4c"></div>
<div class="a" style="left:158px;top:289px;width:3px;height:3px;background:#2a5a42"></div>
<div class="a" style="left:64px;top:202px;width:241px;height:2px;background:#d01a22"></div>
<div class="a" style="left:64px;top:202px;width:2px;height:85px;background:#d01a22"></div>
<div class="a" style="left:303px;top:202px;width:2px;height:85px;background:#d01a22"></div>
<div class="a" style="left:64px;top:285px;width:241px;height:2px;background:#d01a22"></div>
<div class="a" style="left:305px;top:202px;width:1px;height:86px;background:#d01a22;opacity:.45"></div>
<div class="a" style="left:64px;top:287px;width:242px;height:1px;background:#d01a22;opacity:.45"></div>
<div class="a" style="left:703.3px;top:174.5px;width:13.7px;height:238.5px;background:#171717"></div>
<svg class="a" style="left:706.5px;top:178px;" width="8" height="6" viewBox="0 0 8 6" fill="none"><path d="M0.3 5h7.4L4 0.4z" fill="#a8a8a8"/></svg>
<div class="a" style="left:708px;top:187px;width:5px;height:152px;background:#9c9c9c;border-radius:2.5px"></div>
<svg class="a" style="left:706.5px;top:405.5px;" width="8" height="6" viewBox="0 0 8 6" fill="none"><path d="M0.3 0.5h7.4L4 5z" fill="#a8a8a8"/></svg>
<div class="a" style="left:236px;top:413px;width:54px;height:5px;background:#ffffff"></div>
<div class="a" style="left:3px;top:413px;width:238px;height:22px;background:#151615;border-top-right-radius:4px"></div>
<div class="a" style="left:285px;top:413px;width:432px;height:22px;background:#151615;border-top-left-radius:4px"></div>
<div class="a" style="left:3px;top:413px;width:234px;height:1px;background:#0c0c0c"></div>
<div class="a" style="left:289px;top:413px;width:414px;height:1px;background:#0c0c0c"></div>
<svg class="a" style="left:19px;top:419.5px;" width="6" height="9" viewBox="0 0 6 9" fill="none"><path d="M4.8 0.6L1.2 4 4.8 7.4" stroke="#b0b0b0" stroke-width="1"/></svg>
<svg class="a" style="left:42.5px;top:419.5px;" width="6" height="9" viewBox="0 0 6 9" fill="none"><path d="M1 0.6L4.6 4 1 7.4" stroke="#b0b0b0" stroke-width="1"/></svg>
<div class="a t" style="left:87.77px;top:420.00px;font-size:10.76px;line-height:1;color:#e2e2e2;font-weight:400;transform:scaleX(0.880);transform-origin:0 0;-webkit-text-stroke:0.2px #e2e2e2;">Sheet1</div>
<div class="a" style="left:126.5px;top:417.5px;width:1px;height:13.3px;background:#4a4a4a"></div>
<div class="a t" style="left:136.56px;top:420.00px;font-size:10.76px;line-height:1;color:#e2e2e2;font-weight:400;transform:scaleX(0.905);transform-origin:0 0;-webkit-text-stroke:0.2px #e2e2e2;">Sequence example 2</div>
<div class="a" style="left:238px;top:417.5px;width:1px;height:13.3px;background:#4a4a4a"></div>
<div class="a" style="left:240.8px;top:413px;width:44.2px;height:20px;background:#ffffff;border-radius:0 0 4px 4px"></div>
<div class="a t" style="left:247.05px;top:419.00px;font-size:10.32px;line-height:1;color:#262626;font-weight:400;transform:scaleX(0.960);transform-origin:0 0;-webkit-text-stroke:0.1px #262626">Sheet3</div>
<div class="a" style="left:247px;top:429.6px;width:31.3px;height:1.5px;background:#1f6d41"></div>
<div class="a" style="left:287.5px;top:417.5px;width:1px;height:13.3px;background:#4a4a4a"></div>
<svg class="a" style="left:317px;top:419.5px;" width="9" height="9" viewBox="0 0 9 9" fill="none"><path d="M4.5 0.3v8.4M0.3 4.5h8.4" stroke="#e0e0e0" stroke-width="1"/></svg>
<div class="a" style="left:433.7px;top:420.9px;width:1.4px;height:1.4px;background:#e0e0e0;border-radius:50%"></div>
<div class="a" style="left:433.7px;top:423.9px;width:1.4px;height:1.4px;background:#e0e0e0;border-radius:50%"></div>
<div class="a" style="left:433.7px;top:426.9px;width:1.4px;height:1.4px;background:#e0e0e0;border-radius:50%"></div>
<svg class="a" style="left:449.5px;top:420.5px;" width="6" height="7" viewBox="0 0 6 7" fill="none"><path d="M5.5 0.3v6.4L0.3 3.5z" fill="#a8a8a8"/></svg>
<div class="a" style="left:458.4px;top:420.8px;width:230px;height:6px;background:#9c9c9c;border-radius:3px"></div>
<svg class="a" style="left:695px;top:420px;" width="6" height="8" viewBox="0 0 6 8" fill="none"><path d="M0.3 0.3v7.4L5.8 4z" fill="#a8a8a8"/></svg>
<div class="a" style="left:3px;top:435px;width:714px;height:17px;background:#161616"></div>
<div class="a" style="left:3px;top:435px;width:714px;height:1px;background:#262626"></div>
<div class="a t" style="left:10.52px;top:440.00px;font-size:8.43px;line-height:1;color:#d4d4d4;font-weight:400;transform:scaleX(0.854);transform-origin:0 0;-webkit-text-stroke:0.2px #d4d4d4;">Ready</div>
<svg class="a" style="left:44px;top:438.5px;" width="12" height="11" viewBox="0 0 12 11" fill="none"><path d="M5.2 9.6H2Q1 9.6 1 8.6V1.8Q1 .8 2 .8H9.5Q10.5 .8 10.5 1.8V4.6" stroke="#e0e0e0" stroke-width="1"/><rect x="1" y="1" width="9.5" height="1.6" fill="#e0e0e0"/><path d="M2.5 5.2h2.2M2.5 7.6h1.6" stroke="#d0d0d0" stroke-width=".9"/><circle cx="7.6" cy="7.3" r="2.8" stroke="#e6e6e6" stroke-width="1.1" fill="#161616"/><circle cx="7.6" cy="7.3" r="1.1" fill="#e6e6e6"/></svg>
<svg class="a" style="left:66.5px;top:438.5px;" width="12" height="11" viewBox="0 0 12 11" fill="none"><circle cx="5" cy="1.8" r="1.3" stroke="#e0e0e0" stroke-width=".9"/><circle cx="2" cy="3.6" r="1.2" stroke="#e0e0e0" stroke-width=".9"/><circle cx="8.2" cy="3.6" r="1.2" stroke="#e0e0e0" stroke-width=".9"/><path d="M3 3.8Q5 4.6 7.2 3.8M5 3.3V6.3L2.8 9" stroke="#e0e0e0" stroke-width=".9"/><circle cx="2.5" cy="9.4" r=".9" stroke="#e0e0e0" stroke-width=".8"/><path d="M6.3 6.4L10.2 10.2M10.2 6.4L6.3 10.2" stroke="#e0e0e0" stroke-width="1"/></svg>
<div class="a t" style="left:80.01px;top:440.00px;font-size:8.43px;line-height:1;color:#e8e8e8;font-weight:700;transform:scaleX(0.893);transform-origin:0 0;">Accessibility: Investigate</div>
<div class="a" style="left:496.2px;top:436px;width:28.2px;height:16px;background:#2a2a2a"></div>
<svg class="a" style="left:504.5px;top:438.5px;" width="11" height="10" viewBox="0 0 11 10" fill="none"><path d="M0.5 0.5h10v9h-10z M0.5 3.5h10M0.5 6.5h10M3.8 0.5v9M7.2 0.5v9" stroke="#e6e6e6" stroke-width="1"/></svg>
<svg class="a" style="left:533.5px;top:438.5px;" width="12" height="11" viewBox="0 0 12 11" fill="none"><rect x="0.9" y="0.6" width="10.4" height="9" stroke="#d8d8d8" stroke-width="1"/><path d="M2.7 1v8.3M9.5 1v8.3" stroke="#c8c8c8" stroke-width="1.4"/><rect x="4.6" y="3.2" width="3" height="3.6" stroke="#c8c8c8" stroke-width=".8"/></svg>
<svg class="a" style="left:562.5px;top:438.5px;" width="12" height="11" viewBox="0 0 12 11" fill="none"><rect x="0.9" y="0.6" width="10" height="9" stroke="#d8d8d8" stroke-width="1"/><path d="M1 5.8H8.6V.6M4.6 .6V5.8" stroke="#d8d8d8" stroke-width="1"/></svg>
<div class="a" style="left:586.9px;top:443.3px;width:5px;height:1px;background:#d0d0d0"></div>
<div class="a" style="left:596.2px;top:443.3px;width:70.5px;height:1px;background:#8a8a8a"></div>
<div class="a" style="left:629.4px;top:439.7px;width:4.2px;height:8.3px;background:#b0b0b0;border-radius:1px"></div>
<svg class="a" style="left:670.5px;top:440.5px;" width="6" height="7" viewBox="0 0 6 7" fill="none"><path d="M2.9 .5v6.2M.1 3.6h5.6" stroke="#d0d0d0" stroke-width=".9"/></svg>
<div class="a t" style="left:685.24px;top:441.00px;font-size:8.14px;line-height:1;color:#e0e0e0;font-weight:400;transform:scaleX(0.913);transform-origin:0 0;-webkit-text-stroke:0.2px #e0e0e0;">100%</div>
<div class="a" style="left:3px;top:450px;width:714px;height:1px;background:#0e0e0e"></div>
<div class="a" style="left:2px;top:-10px;width:717px;height:462px;border:1px solid #7a7a7a;border-bottom-color:#555;border-radius:4px"></div>
</body></html>
